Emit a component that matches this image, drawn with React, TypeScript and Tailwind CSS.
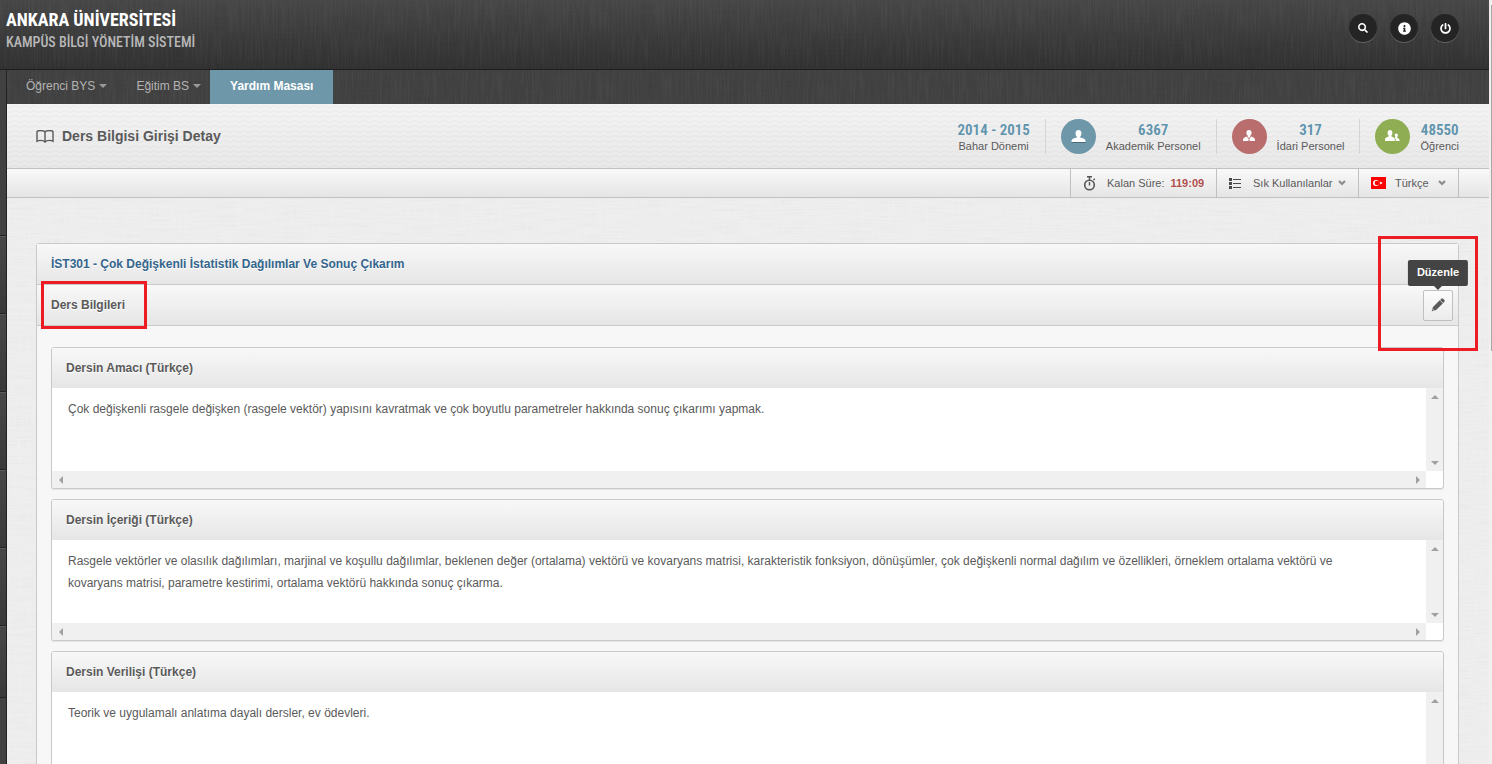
import type { ReactNode } from 'react'
import { FaPowerOff, FaInfoCircle, FaSearch } from 'react-icons/fa'

const BAR = 'bg-gradient-to-b from-[#f8f8f8] to-[#e6e6e6]'
const CONDENSED = "font-['Roboto_Condensed','Liberation_Sans_Narrow','Liberation_Sans',sans-serif]"

const courseFields = [
  {
    id: 'amac',
    title: 'Dersin Amacı (Türkçe)',
    text: 'Çok değişkenli rasgele değişken (rasgele vektör) yapısını kavratmak ve çok boyutlu parametreler hakkında sonuç çıkarımı yapmak.',
  },
  {
    id: 'icerik',
    title: 'Dersin İçeriği (Türkçe)',
    text: 'Rasgele vektörler ve olasılık dağılımları, marjinal ve koşullu dağılımlar, beklenen değer (ortalama) vektörü ve kovaryans matrisi, karakteristik fonksiyon, dönüşümler, çok değişkenli normal dağılım ve özellikleri, örneklem ortalama vektörü ve kovaryans matrisi, parametre kestirimi, ortalama vektörü hakkında sonuç çıkarma.',
  },
  {
    id: 'verilis',
    title: 'Dersin Verilişi (Türkçe)',
    text: 'Teorik ve uygulamalı anlatıma dayalı dersler, ev ödevleri.',
  },
]

// Woven cloth texture: one layer of horizontal threads, one of vertical threads
function Linen({ id, tone }: { id: string; tone: string }) {
  return (
    <svg className={`pointer-events-none absolute inset-0 h-full w-full ${tone}`} aria-hidden="true">
      <filter id={`${id}-h`} x="0" y="0" width="100%" height="100%">
        <feTurbulence type="fractalNoise" baseFrequency="0.03 0.6" numOctaves="2" seed="3" />
        <feColorMatrix values="0 0 0 0 0  0 0 0 0 0  0 0 0 0 0  2.5 0 0 0 -1" />
      </filter>
      <filter id={`${id}-v`} x="0" y="0" width="100%" height="100%">
        <feTurbulence type="fractalNoise" baseFrequency="0.6 0.03" numOctaves="2" seed="8" />
        <feColorMatrix values="0 0 0 0 1  0 0 0 0 1  0 0 0 0 1  2.5 0 0 0 -1" />
      </filter>
      <rect width="100%" height="100%" filter={`url(#${id}-h)`} />
      <rect width="100%" height="100%" filter={`url(#${id}-v)`} />
    </svg>
  )
}

function RoundButton({ label, children }: { label: string; children: ReactNode }) {
  return (
    <button
      aria-label={label}
      className="flex size-7 items-center justify-center rounded-full bg-[#242424] text-white shadow-[0_1px_0_rgba(255,255,255,0.2)]"
    >
      {children}
    </button>
  )
}

function Caret() {
  return (
    <svg width="8" height="4" viewBox="0 0 8 4" className="text-[#999]" aria-hidden="true">
      <path d="M0 0h8L4 4z" fill="currentColor" />
    </svg>
  )
}

function Chevron() {
  return (
    <svg width="8" height="6" viewBox="0 0 8 6" className="text-[#8c8c8c]" aria-hidden="true">
      <path d="M1 1l3 3 3-3" fill="none" stroke="currentColor" strokeWidth="2.2" />
    </svg>
  )
}

function BookIcon() {
  return (
    <svg width="18" height="13" viewBox="0 0 18 13" fill="none" stroke="#5a5a5a" strokeWidth="1.4" aria-hidden="true">
      <path d="M9 2C8 .7 6 .6 4.500.6 3 .6 1.800.8 1 1.500v9.700c.8-.6 2-.8 3.500-.8S8 10.600 9 12c1-1.400 3-1.600 4.500-1.600s2.700.2 3.500.8V1.500C16.200.8 15 .6 13.500.6 12 .6 10 .7 9 2zM9 2v10" />
    </svg>
  )
}

function PencilIcon() {
  return (
    <svg width="14" height="14" viewBox="0 0 14 14" fill="#5a5a5a" aria-hidden="true">
      <path d="M10.100.900c.7-.6 1.600-.6 2.200 0l.9.9c.6.600.6 1.500 0 2.200l-1 1-3.100-3.100z" />
      <path d="M8.700 2.300l3.100 3.100-6.700 6.700-1.600.5-2.100-2.100.6-1.500z" />
      <path d="M1.200 11.100l1.700 1.700L.700 13.300z" />
    </svg>
  )
}

function PersonIcon() {
  return (
    <svg width="15" height="13" viewBox="0 0 15 13" fill="#fff" aria-hidden="true">
      <path d="M7.500 0c2 0 3 1.400 3 3.200 0 1.400-.6 2.600-1.300 3.200v1.200c2 .6 5.300 1 5.300 3.600V12H.500v-.8c0-2.600 3.300-3 5.300-3.600V6.400C5.100 5.800 4.500 4.600 4.500 3.200 4.500 1.400 5.500 0 7.500 0z" />
      <path d="M.500 12h14v1H.500z" fill="#000" fillOpacity=".3" />
    </svg>
  )
}

function StaffIcon() {
  return (
    <svg width="14" height="12" viewBox="0 0 14 12" fill="#fff" aria-hidden="true">
      <path d="M7 0c1.700 0 2.600 1.200 2.600 2.700 0 1.300-.6 2.300-1.200 2.800v.8L7 8.200 5.600 6.300v-.8C5 5 4.400 4 4.400 2.700 4.400 1.200 5.300 0 7 0z" />
      <path d="M4.800 6.400L6.800 9.300 6.200 11H1V9.800c0-2 2-2.800 3.800-3.400zM9.200 6.400c1.800.6 3.800 1.400 3.800 3.400V11H7.800l-.6-1.700z" />
    </svg>
  )
}

function PeopleIcon() {
  return (
    <svg width="15" height="12" viewBox="0 0 15 12" fill="#fff" aria-hidden="true">
      <path d="M5 0c1.600 0 2.400 1.200 2.400 2.800 0 1.200-.4 2.200-1 2.800v1c1.600.5 3.400 1 3.400 3.200V11H0V9.800c0-2.200 2-2.700 3.600-3.200v-1c-.6-.6-1-1.600-1-2.800C2.600 1.200 3.400 0 5 0z" />
      <path d="M11.300 3.500c1.100 0 1.600.8 1.600 1.800 0 .8-.3 1.400-.7 1.800v.8c1.200.3 2.300.8 2.300 2.100v1h-3.700c0-1.700-.5-2.700-1.400-3.400l1-.5v-.3c-.4-.4-.7-.9-.7-1.500 0-1 .5-1.800 1.600-1.800z" />
    </svg>
  )
}

function StopwatchIcon() {
  return (
    <svg width="13" height="15" viewBox="0 0 13 15" fill="none" stroke="#555" aria-hidden="true">
      <circle cx="6.500" cy="9" r="4.800" strokeWidth="1.600" />
      <path d="M4 .8h5M6.500 1v3M6.500 6v3.500M10.500 4l1.300-1.300" strokeWidth="1.400" />
    </svg>
  )
}

function ListIcon() {
  return (
    <svg width="13" height="11" viewBox="0 0 13 11" fill="#4a4a4a" aria-hidden="true">
      <path d="M0 0h3v3H0zM0 4h3v3H0zM0 8h3v3H0zM4 1h8v1H4zM4 5h8v1H4zM4 9h8v1H4z" />
    </svg>
  )
}

function TurkishFlag() {
  return (
    <svg width="15" height="12" viewBox="0 0 15 12" aria-hidden="true">
      <path d="M0 0h15v12H0z" fill="#f00" />
      <circle cx="5" cy="6" r="3" fill="#fff" />
      <circle cx="5.900" cy="6" r="2.300" fill="#f00" />
      <path d="M8 6l1.300-.5.100-1.200.8 1 1.200-.4-.7 1.100.7 1.100-1.200-.4-.8 1-.1-1.200z" fill="#fff" />
    </svg>
  )
}

function Stat({ value, label, circle, icon }: { value: string; label: string; circle?: string; icon?: ReactNode }) {
  return (
    <div className="flex h-[35px] items-center gap-[10px] border-l border-[#d5d5d5] px-[15px] first:border-l-0 last:pr-0">
      {icon && <span className={`flex size-[35px] items-center justify-center rounded-full ${circle}`}>{icon}</span>}
      <div className="pt-1 text-center">
        <div className={`text-[15px] leading-4 font-semibold text-[#5d93ad] ${CONDENSED}`}>{value}</div>
        <div className="text-[11px] leading-4">{label}</div>
      </div>
    </div>
  )
}

function Arrow({ d, label }: { d: string; label: string }) {
  return (
    <button aria-label={label} className="flex size-[17px] items-center justify-center text-[#a0a0a0]">
      <svg width="8" height="8" viewBox="0 0 8 8" fill="currentColor" aria-hidden="true">
        <path d={d} />
      </svg>
    </button>
  )
}

function FieldPanel({ id, title, text }: { id: string; title: string; text: string }) {
  return (
    <section className="shrink-0 overflow-hidden rounded-[3px] border border-[#c9c9c9] bg-white shadow-[0_1px_1px_rgba(0,0,0,0.08)]">
      <label htmlFor={id} className={`flex h-10 items-center px-[14px] font-bold [text-shadow:0_1px_0_#fff] ${BAR}`}>
        {title}
      </label>
      <div className="grid grid-cols-[1fr_17px] grid-rows-[83px_17px]">
        <textarea
          id={id}
          readOnly
          defaultValue={text}
          className="block h-full w-full resize-none overflow-hidden bg-white py-[10px] pr-12 pl-4 leading-[22px] outline-none"
        />
        <div className="flex flex-col justify-between bg-[#f0f0f0]">
          <Arrow label="Yukarı" d="M0 6h8L4 2z" />
          <Arrow label="Aşağı" d="M0 2h8L4 6z" />
        </div>
        <div className="flex justify-between bg-[#f0f0f0]">
          <Arrow label="Sola" d="M6 0v8L2 4z" />
          <Arrow label="Sağa" d="M2 0v8l4-4z" />
        </div>
      </div>
    </section>
  )
}

function SideRail() {
  return (
    <aside className="flex w-[7px] shrink-0 flex-col border-r border-[#222] bg-[#414141]">
      <div className="h-[166px] shrink-0 border-b border-[#222]" />
      {[0, 1, 2, 3, 4].map((i) => (
        <div
          key={i}
          className="h-[78px] shrink-0 border-t border-b border-t-[#5a5a5a] border-b-[#222] bg-gradient-to-b from-[#474747] to-[#393939]"
        />
      ))}
      <div className="h-[72px] shrink-0 border-t border-b border-t-[#5a5a5a] border-b-[#222] bg-gradient-to-b from-[#474747] to-[#393939]" />
    </aside>
  )
}

export default function App() {
  return (
    <div className="flex h-screen overflow-hidden bg-[#f0f0f0] font-['Liberation_Sans',Arial,sans-serif] text-xs text-[#5a5a5a]">
      <div className="flex min-w-0 flex-1 flex-col">
        {/* Top header */}
        <header className="relative flex h-[70px] shrink-0 items-start justify-between border-b border-[#1d1d1d] bg-gradient-to-b from-[#474747] to-[#313131] pr-[30px] pl-[6px]">
          <Linen id="header" tone="opacity-[0.03]" />
          <div className={`relative pt-2 ${CONDENSED}`}>
            <div className="text-lg leading-6 font-bold text-white">ANKARA ÜNİVERSİTESİ</div>
            <div className="text-sm leading-5 font-medium text-[#b8b8b8]">KAMPÜS BİLGİ YÖNETİM SİSTEMİ</div>
          </div>
          <div className="relative flex gap-[13px] pt-[14px]">
            <RoundButton label="Ara">
              <FaSearch size={10} />
            </RoundButton>
            <RoundButton label="Bilgi">
              <FaInfoCircle size={13} />
            </RoundButton>
            <RoundButton label="Çıkış">
              <FaPowerOff size={11} />
            </RoundButton>
          </div>
        </header>

        <div className="flex min-h-0 flex-1">
          <SideRail />
          <div className="flex min-w-0 flex-1 flex-col">
            {/* Main navigation */}
            <nav className="relative flex h-[34px] shrink-0 bg-[#414141] pb-[2px] text-[#b4b4b4]">
              <Linen id="nav" tone="opacity-[0.03]" />
              <a href="#ogrenci" className="relative flex items-center gap-1 pr-[10px] pl-[19px]">
                Öğrenci BYS <Caret />
              </a>
              <a href="#egitim" className="relative flex items-center gap-1 pr-[9px] pl-[19px]">
                Eğitim BS <Caret />
              </a>
              <a
                href="#yardim"
                className="relative -mb-[2px] flex items-center bg-[#6e97aa] px-5 pb-[2px] font-bold text-white"
              >
                Yardım Masası
              </a>
            </nav>

            {/* Page title and statistics */}
            <div className="relative flex h-[65px] shrink-0 items-center justify-between border-b border-[#c0c0c0] bg-gradient-to-b from-[#f4f4f4] to-[#e8e8e8] pr-[30px] pl-[29px]">
              <svg className="absolute inset-0 h-full w-full" aria-hidden="true">
                <pattern id="waves" width="10" height="5" patternUnits="userSpaceOnUse">
                  <path d="M0 2.500q2.500 2 5 0t5 0" fill="none" stroke="#000" strokeOpacity=".03" />
                </pattern>
                <rect width="100%" height="100%" fill="url(#waves)" />
              </svg>
              <h1 className="relative flex items-center gap-2 text-sm font-bold">
                <BookIcon />
                Ders Bilgisi Girişi Detay
              </h1>
              <div className="relative flex">
                <Stat value="2014 - 2015" label="Bahar Dönemi" />
                <Stat value="6367" label="Akademik Personel" circle="bg-[#6e97aa]" icon={<PersonIcon />} />
                <Stat value="317" label="İdari Personel" circle="bg-[#ba6d6d]" icon={<StaffIcon />} />
                <Stat value="48550" label="Öğrenci" circle="bg-[#8fae53]" icon={<PeopleIcon />} />
              </div>
            </div>

            {/* Session bar */}
            <div className="h-[29px] shrink-0 border-b border-[#c0c0c0] bg-gradient-to-b from-[#f9f9f9] to-[#e5e5e5] pr-[30px]">
              <div className="flex h-full justify-end text-[11px]">
                <div className="flex w-[146px] items-center border-l border-[#c0c0c0] pl-3">
                  <StopwatchIcon />
                  <span className="ml-[11px]">Kalan Süre:</span>
                  <b className="ml-[6px] text-[#b3504f]">119:09</b>
                </div>
                <button className="flex w-[142px] items-center border-l border-[#c0c0c0] pr-3 pl-3">
                  <ListIcon />
                  <span className="ml-[11px]">Sık Kullanılanlar</span>
                  <span className="ml-auto">
                    <Chevron />
                  </span>
                </button>
                <button className="flex w-[101px] items-center border-x border-[#c0c0c0] pr-3 pl-3">
                  <TurkishFlag />
                  <span className="ml-[9px]">Türkçe</span>
                  <span className="ml-auto">
                    <Chevron />
                  </span>
                </button>
              </div>
            </div>

            {/* Course details */}
            <main className="relative flex min-h-0 flex-1 flex-col bg-[#eeeeee] pt-[45px] pr-[30px] pl-[29px]">
              <Linen id="page" tone="opacity-[0.02]" />
              <section className="relative flex-1 rounded-t-[3px] border border-[#c9c9c9] bg-[#f7f7f7]">
                <div className={`flex h-[41px] items-center border-b border-[#c9c9c9] px-[14px] ${BAR}`}>
                  <h2 className="font-bold text-[#34658d] [text-shadow:0_1px_0_#fff]">
                    İST301 - Çok Değişkenli İstatistik Dağılımlar Ve Sonuç Çıkarım
                  </h2>
                </div>
                <div
                  className={`relative flex h-[41px] items-center justify-between border-b border-[#c9c9c9] pr-[5px] pl-[14px] ${BAR}`}
                >
                  <h3 className="font-bold [text-shadow:0_1px_0_#fff]">Ders Bilgileri</h3>
                  <div className="relative">
                    <button
                      aria-label="Düzenle"
                      aria-describedby="edit-tip"
                      className="flex h-[31px] w-[30px] items-center justify-center rounded-[2px] border border-[#c0c0c0] bg-gradient-to-b from-[#fbfbfb] to-[#ececec]"
                    >
                      <PencilIcon />
                    </button>
                    <div
                      id="edit-tip"
                      role="tooltip"
                      className="absolute bottom-[35px] left-1/2 flex h-[26px] -translate-x-1/2 items-center rounded-[2px] bg-[#444] px-[9px] text-[11px] font-bold text-white"
                    >
                      Düzenle
                      <svg width="8" height="4" viewBox="0 0 8 4" className="absolute top-full left-1/2 -translate-x-1/2">
                        <path d="M0 0h8L4 4z" fill="#444" />
                      </svg>
                    </div>
                  </div>
                  {/* Highlight frames */}
                  <div className="pointer-events-none absolute -top-1 left-1 z-10 h-12 w-[106px] border-3 border-[#ed1c24]" />
                  <div className="pointer-events-none absolute -top-[49px] -right-5 z-10 h-[115px] w-[100px] border-3 border-[#ed1c24]" />
                </div>
                <div className="flex flex-col gap-[10px] px-[14px] pt-[21px]">
                  {courseFields.map((f) => (
                    <FieldPanel key={f.id} {...f} />
                  ))}
                </div>
              </section>
            </main>
          </div>
        </div>
      </div>
      {/* Page scroll track */}
      <div className="flex w-[3px] shrink-0 justify-end bg-[#f0f0f0] pt-[5px]">
        <div className="h-[346px] w-px bg-[#a8a8a8]" />
      </div>
    </div>
  )
}
